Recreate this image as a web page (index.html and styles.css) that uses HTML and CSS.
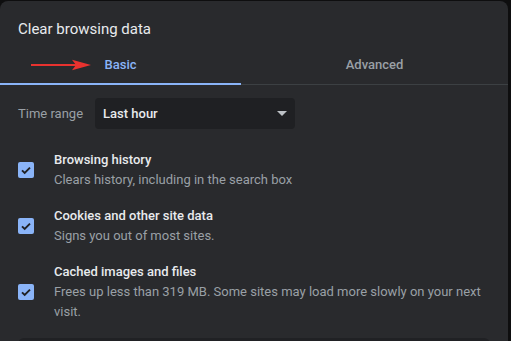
FILE: index.html
```html
<!DOCTYPE html>
<html lang="en">
<head>
<meta charset="utf-8">
<title>Clear browsing data</title>
<link rel="stylesheet" href="styles.css">
</head>
<body>
<div class="dialog">
  <h1 class="title">Clear browsing data</h1>
  <div class="tabs">
    <div class="tab tab-basic active">Basic</div>
    <div class="tab tab-advanced">Advanced</div>
    <svg class="arrow" width="64" height="14" viewBox="0 0 64 14">
      <line x1="0" y1="7" x2="46" y2="7" stroke="#e8322f" stroke-width="2"/>
      <polygon points="41,1.8 60,7 41,12.2 45,7" fill="#e8322f"/>
    </svg>
  </div>
  <div class="range-row">
    <span class="range-label">Time range</span>
    <div class="select">
      <span>Last hour</span>
      <svg class="caret" width="10" height="5" viewBox="0 0 10 5"><polygon points="0,0 10,0 5,5" fill="#bdc1c6"/></svg>
    </div>
  </div>
  <div class="options">
    <div class="option">
      <span class="checkbox"><svg width="16" height="16" viewBox="0 0 16 16"><path d="M4 8.3 L6.7 11 L12 5.6" fill="none" stroke="#202124" stroke-width="1.9"/></svg></span>
      <div class="option-text">
        <div class="option-title">Browsing history</div>
        <div class="option-sub">Clears history, including in the search box</div>
      </div>
    </div>
    <div class="option">
      <span class="checkbox"><svg width="16" height="16" viewBox="0 0 16 16"><path d="M4 8.3 L6.7 11 L12 5.6" fill="none" stroke="#202124" stroke-width="1.9"/></svg></span>
      <div class="option-text">
        <div class="option-title">Cookies and other site data</div>
        <div class="option-sub">Signs you out of most sites.</div>
      </div>
    </div>
    <div class="option">
      <span class="checkbox"><svg width="16" height="16" viewBox="0 0 16 16"><path d="M4 8.3 L6.7 11 L12 5.6" fill="none" stroke="#202124" stroke-width="1.9"/></svg></span>
      <div class="option-text">
        <div class="option-title">Cached images and files</div>
        <div class="option-sub">Frees up less than 319 MB. Some sites may load more slowly on your next visit.</div>
      </div>
    </div>
  </div>
  <div class="footer-box"></div>
</div>
</body>
</html>
```

FILE: styles.css
```css
html, body {
  margin: 0;
  padding: 0;
  background: #0e0e0f;
  height: 100%;
  overflow: hidden;
}

body {
  font-family: Roboto, "Liberation Sans", Arial, sans-serif;
  font-size: 13px;
  line-height: 20px;
  color: #e8eaed;
}

.dialog {
  margin-top: 1px;
  width: 508px;
  height: 340px;
  overflow: hidden;
  background: #292a2d;
  border-radius: 8px 8px 0 0;
  padding-top: 18px;
  box-sizing: border-box;
  display: flex;
  flex-direction: column;
}

.title {
  margin: 0;
  padding-left: 18px;
  font-size: 15px;
  font-weight: 400;
  line-height: 20px;
  color: #e8eaed;
}

.tabs {
  position: relative;
  display: flex;
  flex: none;
  border-bottom: 1px solid #3c4043;
}

.tab {
  padding: 16px 0 8px;
  text-align: center;
  font-weight: 500;
  color: #9aa0a6;
  border-bottom: 2px solid transparent;
  margin-bottom: -1px;
}

.tab-basic {
  width: 241px;
}

.tab-advanced {
  flex: 1;
}

.tab.active {
  color: #8ab4f8;
  border-bottom-color: #8ab4f8;
}

.arrow {
  position: absolute;
  left: 31px;
  top: 19px;
}

.range-row {
  display: flex;
  flex: none;
  align-items: center;
  margin-top: 13px;
  padding-left: 18px;
}

.range-label {
  width: 77px;
  color: #9aa0a6;
}

.select {
  width: 200px;
  height: 31px;
  box-sizing: border-box;
  background: #1f2023;
  border-radius: 4px;
  display: flex;
  align-items: center;
  justify-content: space-between;
  padding: 0 8px 0 8px;
  font-weight: 500;
  color: #e8eaed;
}

.caret {
  display: block;
}

.options {
  display: flex;
  flex: none;
  flex-direction: column;
  gap: 16px;
  margin-top: 21px;
  padding: 0 18px;
}

.option {
  display: flex;
  align-items: center;
  gap: 20px;
}

.checkbox {
  flex: none;
  width: 16px;
  height: 16px;
  background: #8ab4f8;
  border-radius: 2px;
}

.checkbox svg {
  display: block;
}

.option-text {
  flex: 1;
}

.option-title {
  font-weight: 500;
  color: #e8eaed;
}

.option-sub {
  color: #9aa0a6;
}

.footer-box {
  flex: none;
  margin: 16px 18px 0;
  height: 40px;
  background: #202124;
  border-radius: 6px 6px 0 0;
}
```
